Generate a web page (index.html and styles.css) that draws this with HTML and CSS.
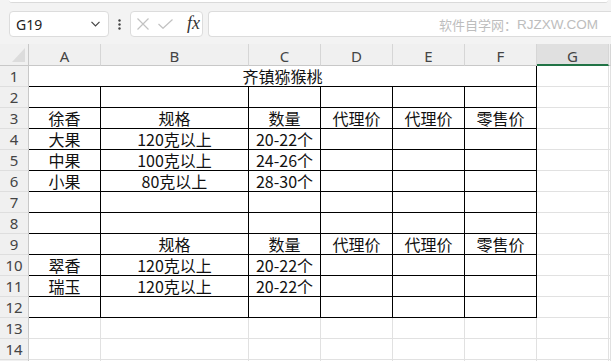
FILE: index.html
```html
<!DOCTYPE html>
<html lang="zh-CN">
<head>
    <meta charset="UTF-8">
    <title>齐镇猕猴桃</title>
    <link rel="stylesheet" href="styles.css">
</head>
<body>
    <div class="ribbon-edge"></div>

    <!-- Formula bar -->
    <div class="formula-bar">
        <div class="name-box">
            <span>G19</span>
            <svg width="9" height="6" viewBox="0 0 9 6"><polyline points="0.5,0.8 4.5,4.8 8.5,0.8" fill="none" stroke="#444" stroke-width="1.2"/></svg>
        </div>
        <div class="dots">
            <svg width="3" height="11" viewBox="0 0 3 11"><circle cx="1.5" cy="1.5" r="1.2" fill="#444"/><circle cx="1.5" cy="5.5" r="1.2" fill="#444"/><circle cx="1.5" cy="9.5" r="1.2" fill="#444"/></svg>
        </div>
        <div class="fx-box">
            <svg class="icon-x" width="12" height="12" viewBox="0 0 12 12"><path d="M0.5 0.5 L11.5 11.5 M11.5 0.5 L0.5 11.5" stroke="#c2c2c2" stroke-width="1.2"/></svg>
            <svg class="icon-check" width="15" height="10" viewBox="0 0 15 10"><polyline points="0.5,5 5,9.3 14.5,0.5" fill="none" stroke="#c2c2c2" stroke-width="1.2"/></svg>
            <span class="fx">fx</span>
        </div>
        <div class="formula-input">
            <span class="wm-cn">软件自学网：</span><span class="wm-en">RJZXW.COM</span>
        </div>
    </div>

    <!-- Sheet -->
    <div class="sheet">
        <div class="corner"><svg width="13" height="14" viewBox="0 0 13 14"><polygon points="13,0 13,14 0,14" fill="#dcdcdc"/></svg></div>
        <div class="ch">A</div>
        <div class="ch">B</div>
        <div class="ch">C</div>
        <div class="ch">D</div>
        <div class="ch">E</div>
        <div class="ch">F</div>
        <div class="ch sel">G</div>
        <div class="ch"></div>

        <div class="rh">1</div>
        <div class="c k title">齐镇猕猴桃</div>
        <div class="c"></div><div class="c"></div>

        <div class="rh">2</div>
        <div class="c k"></div><div class="c k"></div><div class="c k"></div><div class="c k"></div><div class="c k"></div><div class="c k"></div>
        <div class="c"></div><div class="c"></div>

        <div class="rh">3</div>
        <div class="c k">徐香</div><div class="c k">规格</div><div class="c k">数量</div><div class="c k">代理价</div><div class="c k">代理价</div><div class="c k">零售价</div>
        <div class="c"></div><div class="c"></div>

        <div class="rh">4</div>
        <div class="c k">大果</div><div class="c k">120克以上</div><div class="c k">20-22个</div><div class="c k"></div><div class="c k"></div><div class="c k"></div>
        <div class="c"></div><div class="c"></div>

        <div class="rh">5</div>
        <div class="c k">中果</div><div class="c k">100克以上</div><div class="c k">24-26个</div><div class="c k"></div><div class="c k"></div><div class="c k"></div>
        <div class="c"></div><div class="c"></div>

        <div class="rh">6</div>
        <div class="c k">小果</div><div class="c k">80克以上</div><div class="c k">28-30个</div><div class="c k"></div><div class="c k"></div><div class="c k"></div>
        <div class="c"></div><div class="c"></div>

        <div class="rh">7</div>
        <div class="c k"></div><div class="c k"></div><div class="c k"></div><div class="c k"></div><div class="c k"></div><div class="c k"></div>
        <div class="c"></div><div class="c"></div>

        <div class="rh">8</div>
        <div class="c k"></div><div class="c k"></div><div class="c k"></div><div class="c k"></div><div class="c k"></div><div class="c k"></div>
        <div class="c"></div><div class="c"></div>

        <div class="rh">9</div>
        <div class="c k"></div><div class="c k">规格</div><div class="c k">数量</div><div class="c k">代理价</div><div class="c k">代理价</div><div class="c k">零售价</div>
        <div class="c"></div><div class="c"></div>

        <div class="rh">10</div>
        <div class="c k">翠香</div><div class="c k">120克以上</div><div class="c k">20-22个</div><div class="c k"></div><div class="c k"></div><div class="c k"></div>
        <div class="c"></div><div class="c"></div>

        <div class="rh">11</div>
        <div class="c k">瑞玉</div><div class="c k">120克以上</div><div class="c k">20-22个</div><div class="c k"></div><div class="c k"></div><div class="c k"></div>
        <div class="c"></div><div class="c"></div>

        <div class="rh">12</div>
        <div class="c k"></div><div class="c k"></div><div class="c k"></div><div class="c k"></div><div class="c k"></div><div class="c k"></div>
        <div class="c"></div><div class="c"></div>

        <div class="rh">13</div>
        <div class="c"></div><div class="c"></div><div class="c"></div><div class="c"></div><div class="c"></div><div class="c"></div><div class="c"></div><div class="c"></div>

        <div class="rh">14</div>
        <div class="c"></div><div class="c"></div><div class="c"></div><div class="c"></div><div class="c"></div><div class="c"></div><div class="c"></div><div class="c"></div>

        <div class="rh"></div>
        <div class="c"></div><div class="c"></div><div class="c"></div><div class="c"></div><div class="c"></div><div class="c"></div><div class="c"></div><div class="c"></div>
    </div>
</body>
</html>
```

FILE: styles.css
```css
body {
    margin: 0;
    background-color: #f3f3f3;
    font-family: "Noto Sans", "Noto Sans CJK SC", sans-serif;
    overflow: hidden;
}

.ribbon-edge {
    height: 2px;
    margin: 0 3px 0 9px;
    background-color: #fff;
    border-bottom: 1px solid #dadada;
    border-radius: 0 0 6px 6px;
}

/* formula bar */
.formula-bar {
    display: flex;
    align-items: center;
    height: 26px;
    margin-top: 8px;
    padding-left: 9px;
}

.name-box, .fx-box, .formula-input {
    box-sizing: border-box;
    height: 26px;
    background-color: #fff;
    border: 1px solid #dcdcdc;
    border-radius: 4px;
}

.name-box {
    width: 100px;
    display: flex;
    align-items: center;
    justify-content: space-between;
    padding: 0 8px 0 6px;
    font-size: 14px;
    color: #222;
}

.dots {
    width: 21px;
    display: flex;
    justify-content: center;
}

.fx-box {
    width: 73px;
    display: flex;
    align-items: center;
    padding-left: 6px;
}

.icon-check {
    margin-left: 9px;
}

.fx {
    margin-left: 14px;
    font-family: "Liberation Serif", serif;
    font-style: italic;
    font-size: 18px;
    color: #333;
    line-height: 1;
    margin-top: -2px;
}

.formula-input {
    flex: 1;
    margin-left: 5px;
    border-right: none;
    border-radius: 4px 0 0 4px;
    display: flex;
    align-items: center;
    justify-content: flex-end;
    padding-right: 13px;
    color: #bdbdbd;
}

.wm-cn {
    font-family: "Noto Sans CJK SC", sans-serif;
    font-size: 13px;
}

.wm-en {
    font-family: "Liberation Sans", sans-serif;
    font-size: 13.5px;
}

/* sheet grid */
.sheet {
    display: grid;
    grid-template-columns: 29px 72px 148px 72px 72px 72px 72px 72px 1fr;
    grid-template-rows: 22px;
    grid-auto-rows: 21px;
    margin-top: 7px;
}

.corner, .ch, .rh, .c {
    box-sizing: border-box;
}

.corner {
    background-color: #f0f0f0;
    border-right: 1px solid #c8c8c8;
    border-bottom: 1px solid #c8c8c8;
    display: flex;
    align-items: flex-end;
    justify-content: flex-end;
    padding: 0 3px 3px 0;
}

.ch {
    background-color: #f0f0f0;
    border-right: 1px solid #d6d6d6;
    border-bottom: 1px solid #c8c8c8;
    display: flex;
    align-items: center;
    justify-content: center;
    padding-top: 3px;
    font-size: 15px;
    color: #444;
}

.ch.sel {
    background-color: #e0e0e0;
    border-bottom: 2px solid #217346;
    padding-top: 4px;
}

.rh {
    background-color: #f0f0f0;
    border-right: 1px solid #c8c8c8;
    border-bottom: 1px solid #dedede;
    display: flex;
    align-items: center;
    justify-content: center;
    font-size: 15px;
    line-height: 1;
    color: #444;
}

.c {
    background-color: #fff;
    border-right: 1px solid #e1e1e1;
    border-bottom: 1px solid #e1e1e1;
    display: flex;
    align-items: center;
    justify-content: center;
    font-family: "Noto Sans CJK SC", sans-serif;
    font-size: 16px;
    line-height: 1;
    color: #111;
    white-space: nowrap;
}

.c.k {
    border-right-color: #000;
    border-bottom-color: #000;
}

.title {
    grid-column: span 6;
}
```
